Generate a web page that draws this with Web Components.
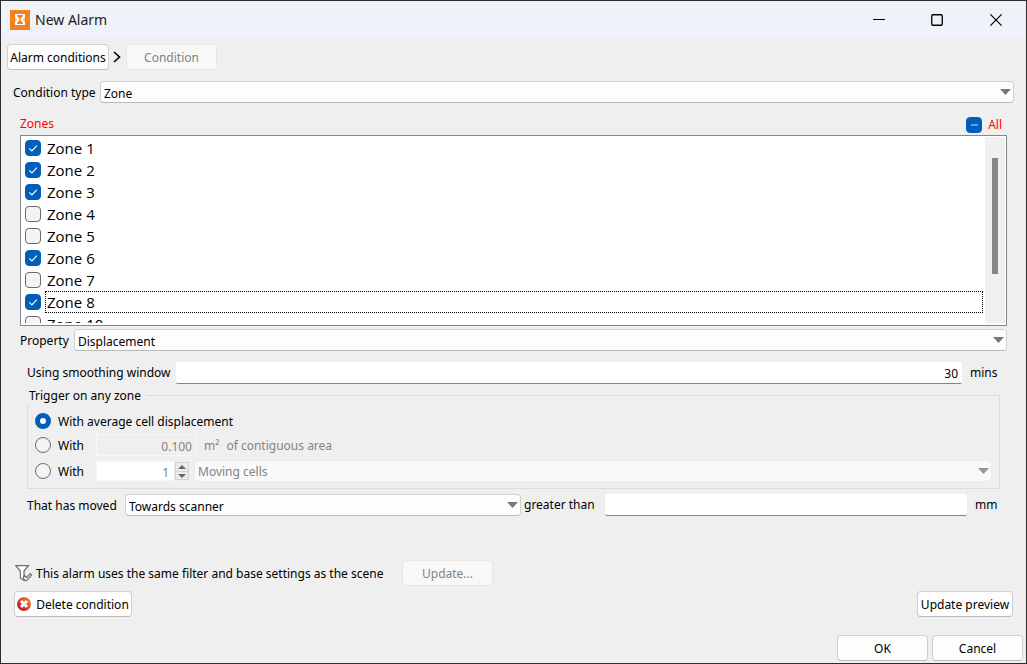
<!DOCTYPE html>
<html lang="en">
<head>
<meta charset="utf-8">
<title>New Alarm</title>
<style>
  html, body { margin: 0; }
  body {
    --accent: #005fb8;
    --face: #fdfdfd;
    --line: #d0d0d0;
    --line-dark: #bababa;
    --muted: #838383;
    font: 12px/16px "Noto Sans", sans-serif;
    color: #000;
    background: #efefef;
  }
</style>
</head>
<body>
<alarm-dialog></alarm-dialog>

<script>
const sheet = `:host, *, *::before, *::after { box-sizing: border-box; }
  button, input, select { font: inherit; color: inherit; margin: 0; }`;

class Base extends HTMLElement {
  connectedCallback() {
    if (this.shadowRoot) return;
    const root = this.attachShadow({ mode: "open" });
    root.innerHTML = `<style>${sheet}</style>` + this.render();
  }
  attr(name, fallback = "") { return this.getAttribute(name) ?? fallback; }
  flag(name) { return this.hasAttribute(name) ? name : ""; }
}

customElements.define("title-bar", class extends Base {
  render() {
    return `<style>
      :host { display: flex; align-items: center; height: 37px; padding-left: 9px; background: #eff3f9; }
      .logo { display: block; margin-right: 5px; }
      h1 { flex: 1; margin: 0; font: 14px/20px "Noto Sans", sans-serif; color: #1a1a1a; }
      button { display: grid; place-items: center; width: 58px; height: 36px; border: 0; padding: 0; background: none; }
      button:last-child { width: 60px; }
    </style>
    <svg class="logo" width="20" height="20" viewBox="0 0 20 20" aria-hidden="true">
      <rect width="20" height="20" fill="#f58020"/>
      <rect x="5" y="4" width="10" height="11" fill="#fff"/>
      <path d="M7 5h6v1l-2 3v1l2 3v1H7v-1l2-3V9L7 6z" fill="#f9a55c"/>
      <path d="M7 5h6l-2 3H9zM9 11h2l2 3H7z" fill="#f58020"/>
      <path d="M5 7l2.500 2.500L5 12zM15 7l-2.500 2.500L15 12z" fill="#f9b87f"/>
    </svg>
    <h1><slot></slot></h1>
    <button aria-label="Minimize"><svg width="12" height="12"><path d="M0 5.5h12" stroke="#000"/></svg></button>
    <button aria-label="Maximize"><svg width="12" height="12"><rect x=".75" y=".75" width="10.5" height="10.5" rx="1" fill="none" stroke="#000" stroke-width="1.3"/></svg></button>
    <button aria-label="Close"><svg width="12" height="12"><path d="M.4.4l11.2 11.2M11.6.4L.4 11.6" stroke="#000" stroke-width="1.2"/></svg></button>`;
  }
});

customElements.define("push-button", class extends Base {
  render() {
    return `<style>
      :host { display: block; flex: none; }
      button { display: flex; align-items: center; justify-content: center; gap: 5px; width: 100%; height: 26px;
        padding: 2px 2px 0; border: 1px solid var(--line); border-bottom-color: var(--line-dark);
        border-radius: 4px; background: var(--face); white-space: nowrap; }
      button:disabled { color: var(--muted); background: #f8f8f8; border-color: #e7e7e7; }
      ::slotted(svg) { margin-bottom: 2px; }
    </style>
    <button type="button" ${this.flag("disabled")}><slot name="icon"></slot><slot></slot></button>`;
  }
});

customElements.define("combo-box", class extends Base {
  render() {
    const label = this.attr("label");
    return `<style>
      :host { display: flex; align-items: center; min-width: 0; }
      label { flex: none; width: var(--label-width, auto); padding-top: 2px; white-space: nowrap; }
      .box { flex: 1; display: grid; align-items: center; min-width: 0; }
      select, svg { grid-area: 1 / 1; }
      select { appearance: none; width: 100%; height: 22px; padding: 3px 20px 0 3px; line-height: 16px;
        border: 1px solid var(--line); border-bottom-color: var(--line-dark); border-radius: 4px; background: var(--face); }
      select:disabled { opacity: 1; padding-top: 2px; color: var(--muted); background: #f9f9f9; border-color: #ebebeb; }
      svg { justify-self: end; margin-right: 3px; pointer-events: none; color: #777; }
      select:disabled + svg { color: #979797; }
    </style>
    ${label ? `<label for="c">${label}</label>` : ""}
    <div class="box">
      <select id="c" ${this.flag("disabled")} aria-label="${label || this.attr("name")}"><option>${this.attr("value")}</option></select>
      <svg width="11" height="6"><path d="M0 0h11L5.5 6z" fill="currentColor"/></svg>
    </div>`;
  }
});

customElements.define("text-field", class extends Base {
  render() {
    return `<style>
      :host { display: flex; align-items: center; min-width: 0; }
      label { flex: none; width: var(--label-width, auto); white-space: nowrap; }
      input { flex: 1; min-width: 0; height: 22px; padding: 2px 4px 0; border: 0; border-bottom: 1px solid #868686;
        border-radius: 2px; background: #fff; text-align: right; outline: 0; }
      span { flex: none; width: var(--unit-width, auto); padding-left: 8px; white-space: nowrap; }
    </style>
    <label for="t">${this.attr("label")}</label>
    <input id="t" type="text" value="${this.attr("value")}">
    <span>${this.attr("unit")}</span>`;
  }
});

customElements.define("check-item", class extends Base {
  render() {
    return `<style>
      :host { display: block; }
      label { display: flex; align-items: center; gap: 4px; }
      .mark { flex: none; display: grid; }
      input, svg { grid-area: 1 / 1; }
      input { appearance: none; width: 16px; height: 16px; border: 1px solid #6b6b6b; border-radius: 4px; background: #f4f4f4; outline: 0; }
      input.on { border-color: var(--accent); background: var(--accent); }
      svg { pointer-events: none; }
      .text { flex: 1; padding: 0 2px; height: var(--item-height, 16px); line-height: var(--item-line, 16px); }
      :host([focused]) .text { outline: 1px dotted #000; outline-offset: -1px; }
    </style>
    <label><span class="mark">
      <input type="checkbox" class="${this.flag("checked") || this.flag("mixed") ? "on" : ""}" ${this.flag("checked")}>
      <svg width="16" height="16" fill="none" stroke="#fff">${
        this.flag("mixed") ? `<path d="M5 8h7" stroke="#8fbbe3" stroke-width="1.4"/>`
        : this.flag("checked") ? `<path d="M4.3 8.3l2.6 2.6 5-5.2" stroke-width="1.1"/>` : ""}</svg>
    </span><span class="text"><slot></slot></span></label>`;
  }
});

customElements.define("zone-list", class extends Base {
  render() {
    return `<style>
      :host { display: flex; height: 191px; padding: 1px; border: 1px solid #828790; background: #fff; }
      .items { flex: 1; overflow: hidden; padding-left: 3px; margin-bottom: 1px; padding-right: 2px;
        font: 15px/22px "Open Sans", sans-serif; --item-height: 22px; --item-line: 22px; }
      .track { flex: none; width: 20px; margin-bottom: 1px; background: #f0f0f0; padding: 21px 7px 0; }
      .thumb { width: 6px; height: 116px; background: #868686; }
    </style>
    <div class="items"><slot></slot></div>
    <div class="track"><div class="thumb"></div></div>`;
  }
});

customElements.define("trigger-group", class extends Base {
  render() {
    return `<style>
      :host { display: block; }
      fieldset { min-width: 0; margin: 0; padding: 6px 7px 4px 7px; border: 1px solid #dcdcdc; border-top: 0; border-radius: 0; }
      legend { display: flex; align-items: center; width: calc(100% + 16px); height: 16px; margin: 0 -8px 0 -8px; padding: 0 0 0 2px; gap: 5px; white-space: nowrap; }
      legend::after { content: ""; flex: 1; align-self: flex-start; margin-top: 7px; height: 9px; border: 1px solid #dcdcdc; border-width: 1px 1px 0 0; }
      .row { display: flex; align-items: center; height: 26px; }
      .row:first-of-type { height: 22px; }
      .choice { display: flex; align-items: center; gap: 7px; white-space: nowrap; }
      .choice span, .area span { padding-top: 2px; }
      .short { width: 61px; flex: none; }
      input[type=radio] { appearance: none; flex: none; width: 16px; height: 16px; border: 1px solid #6b6b6b; border-radius: 50%; background: #f4f4f4; }
      input[type=radio]:checked { border: 5px solid var(--accent); background: #fff; }
      .num { color: var(--muted); text-align: right; border: 1px solid #f7f7f7; background: #efefef; padding: 2px 3px 0; height: 22px; width: 100px; }
      .count { width: 78px; height: 20px; padding: 2px 4px 0; background: #fff; border: 1px solid #f7f7f7; }
      .area { margin-left: 8px; color: var(--muted); display: flex; gap: 7px; }
      .spin { display: grid; width: 14px; height: 18px; margin: 0 5px 0 1px; border: 1px solid #d4d4d4; }
      .spin button { display: grid; place-items: center; border: 0; padding: 0; height: 8px; background: #ececec; }
      .spin button + button { border-top: 1px solid #d4d4d4; }
      combo-box { flex: 1; }
    </style>
    <fieldset>
      <legend>Trigger on any zone</legend>
      <div class="row"><label class="choice"><input type="radio" name="m" checked><span>With average cell displacement</span></label></div>
      <div class="row"><label class="choice short"><input type="radio" name="m"><span>With</span></label>
        <input class="num" type="text" value="0.100" disabled aria-label="Area">
        <span class="area"><span>m²</span><span>of contiguous area</span></span></div>
      <div class="row"><label class="choice short"><input type="radio" name="m"><span>With</span></label>
        <input class="num count" type="text" value="1" disabled aria-label="Cells">
        <span class="spin">
          <button type="button" aria-label="More"><svg width="8" height="4"><path d="M0 4L4 0 8 4z" fill="#666"/></svg></button>
          <button type="button" aria-label="Less"><svg width="8" height="4"><path d="M0 0h8L4 4z" fill="#666"/></svg></button>
        </span>
        <combo-box disabled name="Cell kind" value="Moving cells"></combo-box></div>
    </fieldset>`;
  }
});

customElements.define("alarm-dialog", class extends Base {
  render() {
    const zones = [[1, 1], [2, 1], [3, 1], [4, 0], [5, 0], [6, 1], [7, 0], [8, 1], [10, 0]];
    const items = zones.map(([n, on]) =>
      `<check-item ${on ? "checked" : ""} ${n === 8 ? "focused" : ""}>Zone ${n}</check-item>`).join("");
    return `<style>
      :host { display: flex; flex-direction: column; min-height: 100vh; border: 1px solid #2d2b2e; background: #efefef; }
      main { flex: 1; display: flex; flex-direction: column; padding: 6px 3px 2px; }
      nav { display: flex; align-items: center; gap: 4px; padding-left: 3px; }
      nav push-button:first-child { width: 102px; }
      nav svg { margin-right: 1px; }
      .wide { width: 91px; }
      .type { --label-width: 87px; margin: 11px 9px 0; }
      .head { display: flex; justify-content: space-between; align-items: center; height: 22px; padding: 0 19px 0 16px; margin-top: 10px; color: #f00; }
      .head check-item { margin-top: 2px; }
      .zones { margin: 0 16px; }
      .property { --label-width: 54px; margin: 3px 16px 0; }
      .window { --label-width: 149px; --unit-width: 38px; margin: 11px 23px 0; }
      trigger-group { margin: 4px 23px 0; }
      .moved { display: flex; gap: 3px; margin: 5px 23px 0; }
      .moved combo-box { --label-width: 98px; flex: 494; }
      .moved text-field { --label-width: 81px; --unit-width: 33px; flex: 476; }
      .gap { flex: 1; }
      .filter { display: flex; align-items: center; padding-left: 11px; }
      .filter p { min-width: 358px; margin: 0 8px 0 4px; padding-top: 2px; }
      .actions { display: flex; justify-content: space-between; margin: 5px 10px 0; }
      .delete { width: 118px; }
      .preview { width: 96px; }
      footer { display: flex; justify-content: flex-end; gap: 4px; margin-top: 18px; }
    </style>
    <title-bar>New Alarm</title-bar>
    <main>
      <nav>
        <push-button>Alarm conditions</push-button>
        <svg width="8" height="12" fill="none" stroke="#000" stroke-width="1.6"><path d="M1 1l5.500 5L1 11"/></svg>
        <push-button class="wide" disabled>Condition</push-button>
      </nav>
      <combo-box class="type" label="Condition type" value="Zone"></combo-box>
      <div class="head"><span>Zones</span><check-item mixed>All</check-item></div>
      <zone-list class="zones">${items}</zone-list>
      <combo-box class="property" label="Property" value="Displacement"></combo-box>
      <text-field class="window" label="Using smoothing window" value="30" unit="mins"></text-field>
      <trigger-group></trigger-group>
      <div class="moved">
        <combo-box label="That has moved" value="Towards scanner"></combo-box>
        <text-field label="greater than" value="" unit="mm"></text-field>
      </div>
      <div class="gap"></div>
      <div class="filter">
        <svg width="17" height="18" viewBox="0 0 17 18" fill="#fff" stroke="#6c6c6c" stroke-width="1.2">
          <path d="M.6 1.600h12.800L9 7v9.400L5.400 14V7z"/>
          <path d="M9.500 11.500l2 2.200 3.800-4 1.200 1.500-4.700 5.300h-1.600l-2-2.600z"/>
        </svg>
        <p>This alarm uses the same filter and base settings as the scene</p>
        <push-button class="wide" disabled>Update...</push-button>
      </div>
      <div class="actions">
        <push-button class="delete">
          <svg slot="icon" width="14" height="14" viewBox="0 0 14 14">
            <defs><linearGradient id="g" x1="1" y1="0" x2="0" y2="1"><stop offset=".2" stop-color="#ee7b2c"/><stop offset=".7" stop-color="#c0282b"/></linearGradient></defs>
            <circle cx="7" cy="7" r="7" fill="url(#g)"/>
            <path d="M4 4l6 6M10 4l-6 6" stroke="#fff" stroke-width="3"/>
          </svg>Delete condition</push-button>
        <push-button class="preview">Update preview</push-button>
      </div>
      <footer>
        <push-button class="wide">OK</push-button>
        <push-button class="wide">Cancel</push-button>
      </footer>
    </main>`;
  }
});
</script>
</body>
</html>
